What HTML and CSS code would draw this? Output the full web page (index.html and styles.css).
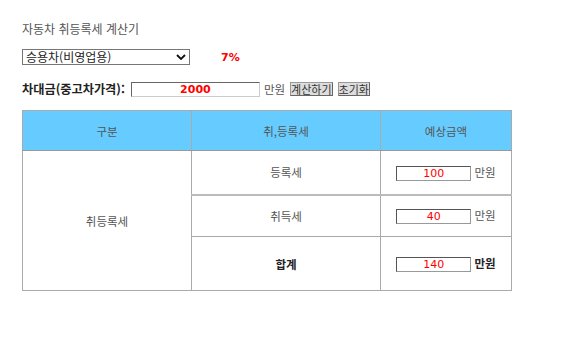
FILE: index.html
```html
<!DOCTYPE html>
<html lang="ko">
<head>
    <meta charset="UTF-8">
    <meta name="viewport" content="width=device-width, initial-scale=1.0">
    <title>자동차 취등록세 계산기</title>
    <link rel="stylesheet" href="styles.css">
</head>
<body>
    <div class="wrap">
        <h1 class="title">자동차 취등록세 계산기</h1>

        <div class="row row-type">
            <div class="select-box">
                <select id="car-type">
                    <option value="7">승용차(비영업용)</option>
                    <option value="5">승용차(영업용)</option>
                    <option value="5">승합차</option>
                    <option value="5">화물차</option>
                </select>
                <svg class="select-arrow" width="10" height="6" viewBox="0 0 10 6">
                    <path d="M1 1 L5 5 L9 1" fill="none" stroke="#111" stroke-width="1.8"/>
                </svg>
            </div>
            <span class="rate" id="rate">7%</span>
        </div>

        <div class="row row-price">
            <label for="price" class="price-label">차대금(중고차가격):</label>
            <input type="text" id="price" class="price-input" value="2000">
            <span class="unit">만원</span>
            <button type="button" class="btn" id="calc-btn">계산하기</button>
            <button type="button" class="btn" id="reset-btn">초기화</button>
        </div>

        <table class="tax-table">
            <colgroup>
                <col class="col-kind">
                <col class="col-name">
                <col class="col-amount">
            </colgroup>
            <thead>
                <tr>
                    <th>구분</th>
                    <th>취,등록세</th>
                    <th class="amount-cell">예상금액</th>
                </tr>
            </thead>
            <tbody>
                <tr class="row-reg">
                    <td rowspan="3" class="kind">취등록세</td>
                    <td>등록세</td>
                    <td class="amount-cell"><input type="text" class="amount" id="reg-tax" value="100"> 만원</td>
                </tr>
                <tr class="row-acq">
                    <td>취득세</td>
                    <td class="amount-cell"><input type="text" class="amount" id="acq-tax" value="40"> 만원</td>
                </tr>
                <tr class="row-total">
                    <td><strong>합계</strong></td>
                    <td class="amount-cell"><input type="text" class="amount" id="total-tax" value="140"> <strong>만원</strong></td>
                </tr>
            </tbody>
        </table>
    </div>

    <script>
        var regRate = 5;

        document.getElementById('car-type').addEventListener('change', function() {
            document.getElementById('rate').textContent = this.value + '%';
        });

        document.getElementById('calc-btn').addEventListener('click', function() {
            // 차량가격 기준 세액 계산
            var price = parseFloat(document.getElementById('price').value) || 0;
            var acqRate = parseFloat(document.getElementById('car-type').value) || 0;
            var reg = Math.round(price * regRate / 100);
            var acq = Math.round(price * (acqRate - regRate) / 100);
            document.getElementById('reg-tax').value = reg;
            document.getElementById('acq-tax').value = acq;
            document.getElementById('total-tax').value = reg + acq;
        });

        document.getElementById('reset-btn').addEventListener('click', function() {
            document.getElementById('price').value = '';
            document.getElementById('reg-tax').value = '';
            document.getElementById('acq-tax').value = '';
            document.getElementById('total-tax').value = '';
        });
    </script>
</body>
</html>
```

FILE: styles.css
```css
* {
    box-sizing: border-box;
}

body {
    margin: 0;
    background-color: #fff;
    color: #555;
    font-family: "Noto Sans CJK KR", "DejaVu Sans", sans-serif;
    font-size: 11.5px;
}

.wrap {
    padding: 21px 22px 40px;
}

.title {
    margin: 0;
    font-size: 12px;
    font-weight: normal;
    line-height: 16px;
    color: #555;
}

.row {
    display: flex;
    align-items: center;
}

.row-type {
    margin-top: 12px;
    height: 16px;
}

.select-box {
    position: relative;
    width: 168px;
    height: 16px;
}

.select-box select {
    appearance: none;
    -webkit-appearance: none;
    width: 100%;
    height: 100%;
    margin: 0;
    padding: 0 0 0 3px;
    border: 1px solid #767676;
    border-radius: 0;
    background-color: #fff;
    color: #222;
    font-family: inherit;
    font-size: 12px;
    line-height: 14px;
}

.select-arrow {
    position: absolute;
    right: 4px;
    top: 5px;
    pointer-events: none;
}

.rate {
    margin-left: 31px;
    color: #f00;
    font-weight: bold;
    font-size: 11px;
    font-family: "DejaVu Sans", sans-serif;
}

.row-price {
    margin-top: 16px;
    height: 16px;
}

.price-label {
    font-weight: bold;
    font-size: 12.2px;
    color: #222;
    margin-right: 6px;
}

.price-input {
    width: 129px;
    height: 15px;
    margin: 0;
    padding: 0;
    border: 1px solid #ccc;
    border-top-color: #666;
    border-left-color: #666;
    color: #f00;
    font-weight: bold;
    text-align: center;
    font-family: "DejaVu Sans", sans-serif;
    font-size: 11px;
}

.unit {
    margin: 0 5px 0 4px;
    color: #555;
}

.btn {
    height: 14px;
    margin: 0 5px 0 0;
    padding: 0;
    border: 1px solid #666;
    border-top-color: #999;
    border-left-color: #999;
    background-color: #ddd;
    color: #333;
    font-family: inherit;
    font-size: 11px;
    line-height: 12px;
}

.tax-table {
    margin-top: 13px;
    width: 489px;
    border-collapse: collapse;
    table-layout: fixed;
}

.col-kind {
    width: 169px;
}

.col-name {
    width: 189px;
}

.col-amount {
    width: 131px;
}

.tax-table th,
.tax-table td {
    border: 1px solid #aaa;
    text-align: center;
    font-weight: normal;
    color: #555;
    padding: 0;
}

.tax-table th {
    height: 40px;
    background-color: #66ccff;
    border-bottom-color: #999;
}

.tax-table td.amount-cell,
.tax-table th.amount-cell {
    border-left-color: #ccc;
}

.row-reg td {
    height: 44px;
}

.row-reg td:not(.kind) {
    border-bottom: 2px solid #bbb;
}

.row-acq td {
    height: 42px;
}

.row-total td {
    height: 54px;
}

.tax-table strong {
    color: #222;
}

.amount {
    width: 75px;
    height: 15px;
    margin: 0;
    padding: 0;
    border: 1px solid #999;
    border-top-color: #555;
    border-left-color: #555;
    color: #f00;
    text-align: center;
    font-family: "DejaVu Sans", sans-serif;
    font-size: 11px;
    vertical-align: middle;
}
```
